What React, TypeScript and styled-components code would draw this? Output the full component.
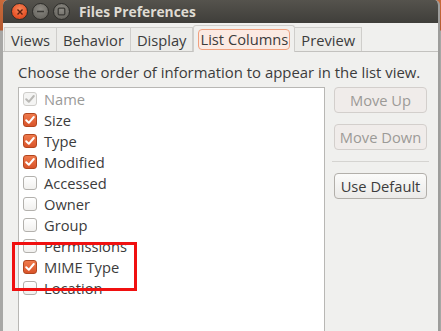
import React from "react";
import styled, { createGlobalStyle } from "styled-components";

const Global = createGlobalStyle`
  html, body { margin: 0; padding: 0; overflow: hidden; }
  body { width: 441px; height: 331px; background: #a9a9a7; font-family: "Open Sans", "Noto Sans", sans-serif; }
`;

const Screen = styled.div`
  width: 441px;
  height: 331px;
  display: flex;
  background: linear-gradient(180deg, #c86a3a 0px, #b45a30 30px, #a7a7a5 31px, #a7a7a5 100%);
  overflow: hidden;
`;

const Window = styled.div`
  margin-left: 3px;
  width: 435px;
  height: 331px;
  display: flex;
  flex-direction: column;
  background: #f0f0ee;
  border-right: 2px solid #9d9d9b;
  border-radius: 5px 5px 0 0;
  overflow: hidden;
`;

const TitleBar = styled.div`
  height: 23px;
  flex: none;
  display: flex;
  align-items: center;
  padding-left: 8px;
  gap: 4px;
  background: linear-gradient(180deg, #55534d 0%, #3f3e3a 100%);
`;

const WinButton = styled.div<{ $close?: boolean }>`
  width: 17px;
  height: 17px;
  border-radius: 50%;
  display: flex;
  align-items: center;
  justify-content: center;
  box-sizing: border-box;
  background: ${(p) =>
    p.$close
      ? "radial-gradient(circle at 50% 35%, #f58a5c 0%, #e8552a 60%, #c9421c 100%)"
      : "radial-gradient(circle at 50% 35%, #8c8a84 0%, #6c6a64 70%, #5a5853 100%)"};
  border: 1px solid #2e2d2a;
`;

const Title = styled.div`
  margin-left: 5px;
  font-family: "Open Sans", "Noto Sans", sans-serif;
  font-weight: 700;
  font-size: 13.8px;
  color: #dfdbd2;
`;

const TabRow = styled.div`
  flex: none;
  height: 29px;
  display: flex;
  align-items: flex-end;
  padding-left: 1px;
  position: relative;
  &::after {
    content: "";
    position: absolute;
    left: 0;
    right: 0;
    bottom: 0;
    height: 1px;
    background: #c3c2bf;
  }
`;

const Tab = styled.div<{ $active?: boolean }>`
  height: ${(p) => (p.$active ? "27px" : "25px")};
  box-sizing: border-box;
  display: flex;
  align-items: center;
  padding: 0 ${(p) => (p.$active ? "4px" : "6px")};
  font-size: 14.7px;
  color: #3c3c3c;
  background: ${(p) => (p.$active ? "#f0f0ee" : "#ecece9")};
  border: 1px solid #cfcecb;
  border-bottom: none;
  border-left: ${(p) => (p.$active ? "1px solid #cfcecb" : "none")};
  border-radius: ${(p) => (p.$active ? "3px 3px 0 0" : "0")};
  position: relative;
  z-index: ${(p) => (p.$active ? 1 : 0)};
  &:first-child { border-left: 1px solid #cfcecb; }
`;

const FocusLabel = styled.span`
  border: 1px solid #f0a07e;
  background: #fbeae3;
  border-radius: 4px;
  padding: 0 1px;
  line-height: 19px;
`;

const Body = styled.div`
  flex: 1;
  display: flex;
  flex-direction: column;
  padding: 10px 0 0 15px;
  min-height: 0;
`;

const Prompt = styled.div`
  font-size: 14.9px;
  color: #3c3c3c;
  height: 23px;
  line-height: 20px;
`;

const Columns = styled.div`
  display: flex;
  flex: 1;
  min-height: 0;
  margin-top: 2px;
`;

const ListBox = styled.div`
  width: 307px;
  flex: none;
  box-sizing: border-box;
  background: #ffffff;
  border: 1px solid #b8b7b4;
  border-bottom: none;
  padding: 0 0 0 4px;
  display: flex;
  flex-direction: column;
  position: relative;
`;

const Row = styled.div<{ $disabled?: boolean }>`
  height: 21px;
  flex: none;
  display: flex;
  align-items: center;
  gap: 7px;
  font-size: 14.7px;
  color: ${(p) => (p.$disabled ? "#9a9a98" : "#3c3c3c")};
`;

const Box = styled.div<{ $checked?: boolean; $disabled?: boolean }>`
  width: 14px;
  height: 14px;
  box-sizing: border-box;
  border-radius: 3px;
  display: flex;
  align-items: center;
  justify-content: center;
  background: ${(p) =>
    p.$disabled
      ? "#f4f4f3"
      : p.$checked
      ? "linear-gradient(180deg, #ef7a4c 0%, #d9542a 100%)"
      : "linear-gradient(180deg, #ffffff 0%, #f1f0ee 100%)"};
  border: 1px solid
    ${(p) => (p.$disabled ? "#cfcecb" : p.$checked ? "#b2461f" : "#b3b1ad")};
`;

const Highlight = styled.div`
  position: absolute;
  left: -7px;
  top: 154px;
  width: 119px;
  height: 43px;
  border: 3px solid #f01010;
`;

const Side = styled.div`
  flex: 1;
  display: flex;
  flex-direction: column;
  padding: 0 11px 0 9px;
  gap: 11px;
`;

const Button = styled.div<{ $disabled?: boolean }>`
  height: 26px;
  box-sizing: border-box;
  border: 1px solid ${(p) => (p.$disabled ? "#d3cfcc" : "#b2afaa")};
  border-radius: 4px;
  display: flex;
  align-items: center;
  justify-content: center;
  font-size: 14.7px;
  color: ${(p) => (p.$disabled ? "#9c9a97" : "#3c3c3c")};
  background: ${(p) =>
    p.$disabled ? "#f0ecea" : "linear-gradient(180deg, #fbfbfa 0%, #ebeae8 100%)"};
`;

const Separator = styled.div`
  height: 1px;
  background: #d5d4d1;
  margin: 0 -2px;
`;

const Check = ({ color }: { color: string }) => (
  <svg width="12" height="12" viewBox="0 0 12 12">
    <path d="M2.2 6.3 L4.8 8.8 L9.8 3" fill="none" stroke={color} strokeWidth="2" strokeLinecap="round" strokeLinejoin="round" />
  </svg>
);

const items: { label: string; checked: boolean; disabled?: boolean }[] = [
  { label: "Name", checked: true, disabled: true },
  { label: "Size", checked: true },
  { label: "Type", checked: true },
  { label: "Modified", checked: true },
  { label: "Accessed", checked: false },
  { label: "Owner", checked: false },
  { label: "Group", checked: false },
  { label: "Permissions", checked: false },
  { label: "MIME Type", checked: true },
  { label: "Location", checked: false },
];

export default function App() {
  return (
    <>
      <Global />
      <Screen>
        <Window>
          <TitleBar>
            <WinButton $close>
              <svg width="8" height="8" viewBox="0 0 8 8">
                <path d="M1.5 1.5 L6.5 6.5 M6.5 1.5 L1.5 6.5" stroke="#5a2010" strokeWidth="1.4" />
              </svg>
            </WinButton>
            <WinButton>
              <svg width="9" height="9" viewBox="0 0 9 9">
                <path d="M1 4.5 H8" stroke="#3a3935" strokeWidth="1.4" />
              </svg>
            </WinButton>
            <WinButton>
              <svg width="9" height="9" viewBox="0 0 9 9">
                <rect x="1.2" y="1.2" width="6.6" height="6.6" rx="1" fill="none" stroke="#3a3935" strokeWidth="1.3" />
              </svg>
            </WinButton>
            <Title>Files Preferences</Title>
          </TitleBar>
          <TabRow>
            <Tab>Views</Tab>
            <Tab>Behavior</Tab>
            <Tab>Display</Tab>
            <Tab $active>
              <FocusLabel>List Columns</FocusLabel>
            </Tab>
            <Tab>Preview</Tab>
          </TabRow>
          <Body>
            <Prompt>Choose the order of information to appear in the list view.</Prompt>
            <Columns>
              <ListBox>
                {items.map((it) => (
                  <Row key={it.label} $disabled={it.disabled}>
                    <Box $checked={it.checked} $disabled={it.disabled}>
                      {it.checked && <Check color={it.disabled ? "#b9b8b5" : "#ffffff"} />}
                    </Box>
                    {it.label}
                  </Row>
                ))}
                <Highlight />
              </ListBox>
              <Side>
                <Button $disabled>Move Up</Button>
                <Button $disabled>Move Down</Button>
                <Separator />
                <Button>Use Default</Button>
              </Side>
            </Columns>
          </Body>
        </Window>
      </Screen>
    </>
  );
}
